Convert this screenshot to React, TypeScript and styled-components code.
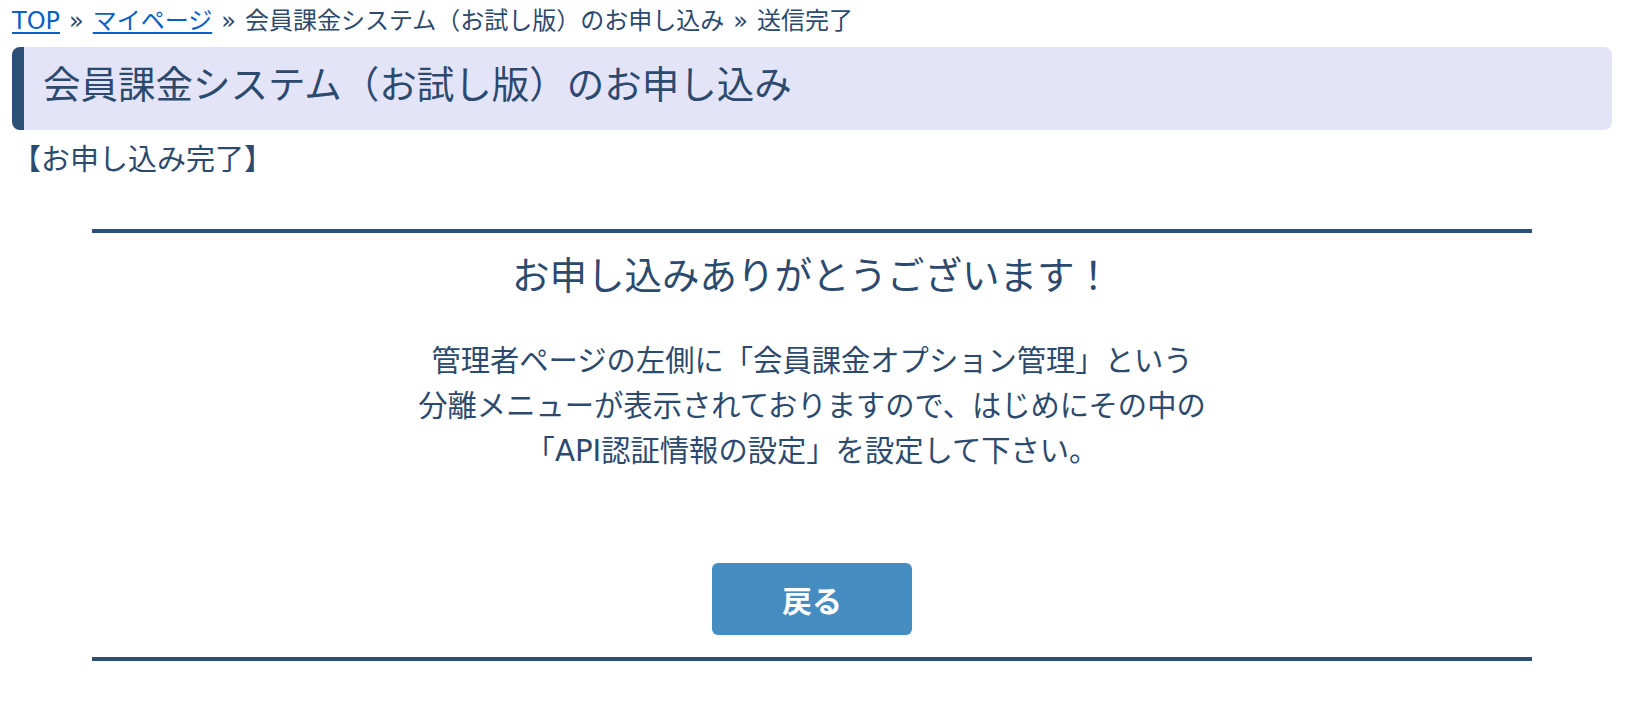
import React from 'react';
import styled, { createGlobalStyle } from 'styled-components';

const GlobalStyle = createGlobalStyle`
  body {
    margin: 0;
    background: #fff;
    color: #2c4a6e;
    font-family: "DejaVu Sans", "Noto Sans CJK JP", sans-serif;
  }
`;

const Page = styled.div`
  width: 1600px;
  margin-left: 12px;
`;

const Breadcrumb = styled.nav`
  padding-top: 6px;
  font-size: 24px;
  line-height: 30px;
  white-space: nowrap;

  a {
    color: #0a5fc8;
    text-decoration: underline;
    text-underline-offset: 3px;
  }
`;

const Sep = styled.span`
  margin: 0 9px;
`;

const TitleBand = styled.h1`
  margin: 11px 0 0;
  padding: 13px 0 20px 19px;
  background: #e4e4f9;
  border-left: 12px solid #2c4f76;
  border-radius: 8px;
  font-size: 37.5px;
  font-weight: normal;
  line-height: 50px;
`;

const Status = styled.p`
  margin: 10px 0 0;
  font-size: 29px;
  line-height: 40px;
`;

const DoneBox = styled.section`
  width: 90%;
  margin: 49px auto 0;
  border-top: 4px solid #2c4f76;
  border-bottom: 4px solid #2c4f76;
  text-align: center;
  padding: 18px 0 22px;
`;

const Thanks = styled.h2`
  margin: 0;
  font-size: 37.5px;
  font-weight: normal;
  line-height: 50px;
`;

const Message = styled.p`
  margin: 38px 0 0;
  font-size: 29.3px;
  line-height: 45px;
`;

const BackButton = styled.button`
  display: block;
  width: 200px;
  height: 72px;
  margin: 89px auto 0;
  border: none;
  border-radius: 6px;
  background: #458cc0;
  color: #fff;
  font-family: "Noto Sans CJK JP", sans-serif;
  font-size: 30px;
  font-weight: bold;
  cursor: pointer;
`;

export default function App() {
  return (
    <>
      <GlobalStyle />
      <Page>
        <Breadcrumb>
          <a href="#">TOP</a>
          <Sep>»</Sep>
          <a href="#">マイページ</a>
          <Sep>»</Sep>
          会員課金システム（お試し版）のお申し込み
          <Sep>»</Sep>
          送信完了
        </Breadcrumb>
        <TitleBand>会員課金システム（お試し版）のお申し込み</TitleBand>
        <Status>【お申し込み完了】</Status>
        <DoneBox>
          <Thanks>お申し込みありがとうございます！</Thanks>
          <Message>
            管理者ページの左側に「会員課金オプション管理」という
            <br />
            分離メニューが表示されておりますので、はじめにその中の
            <br />
            「API認証情報の設定」を設定して下さい。
          </Message>
          <BackButton>戻る</BackButton>
        </DoneBox>
      </Page>
    </>
  );
}
